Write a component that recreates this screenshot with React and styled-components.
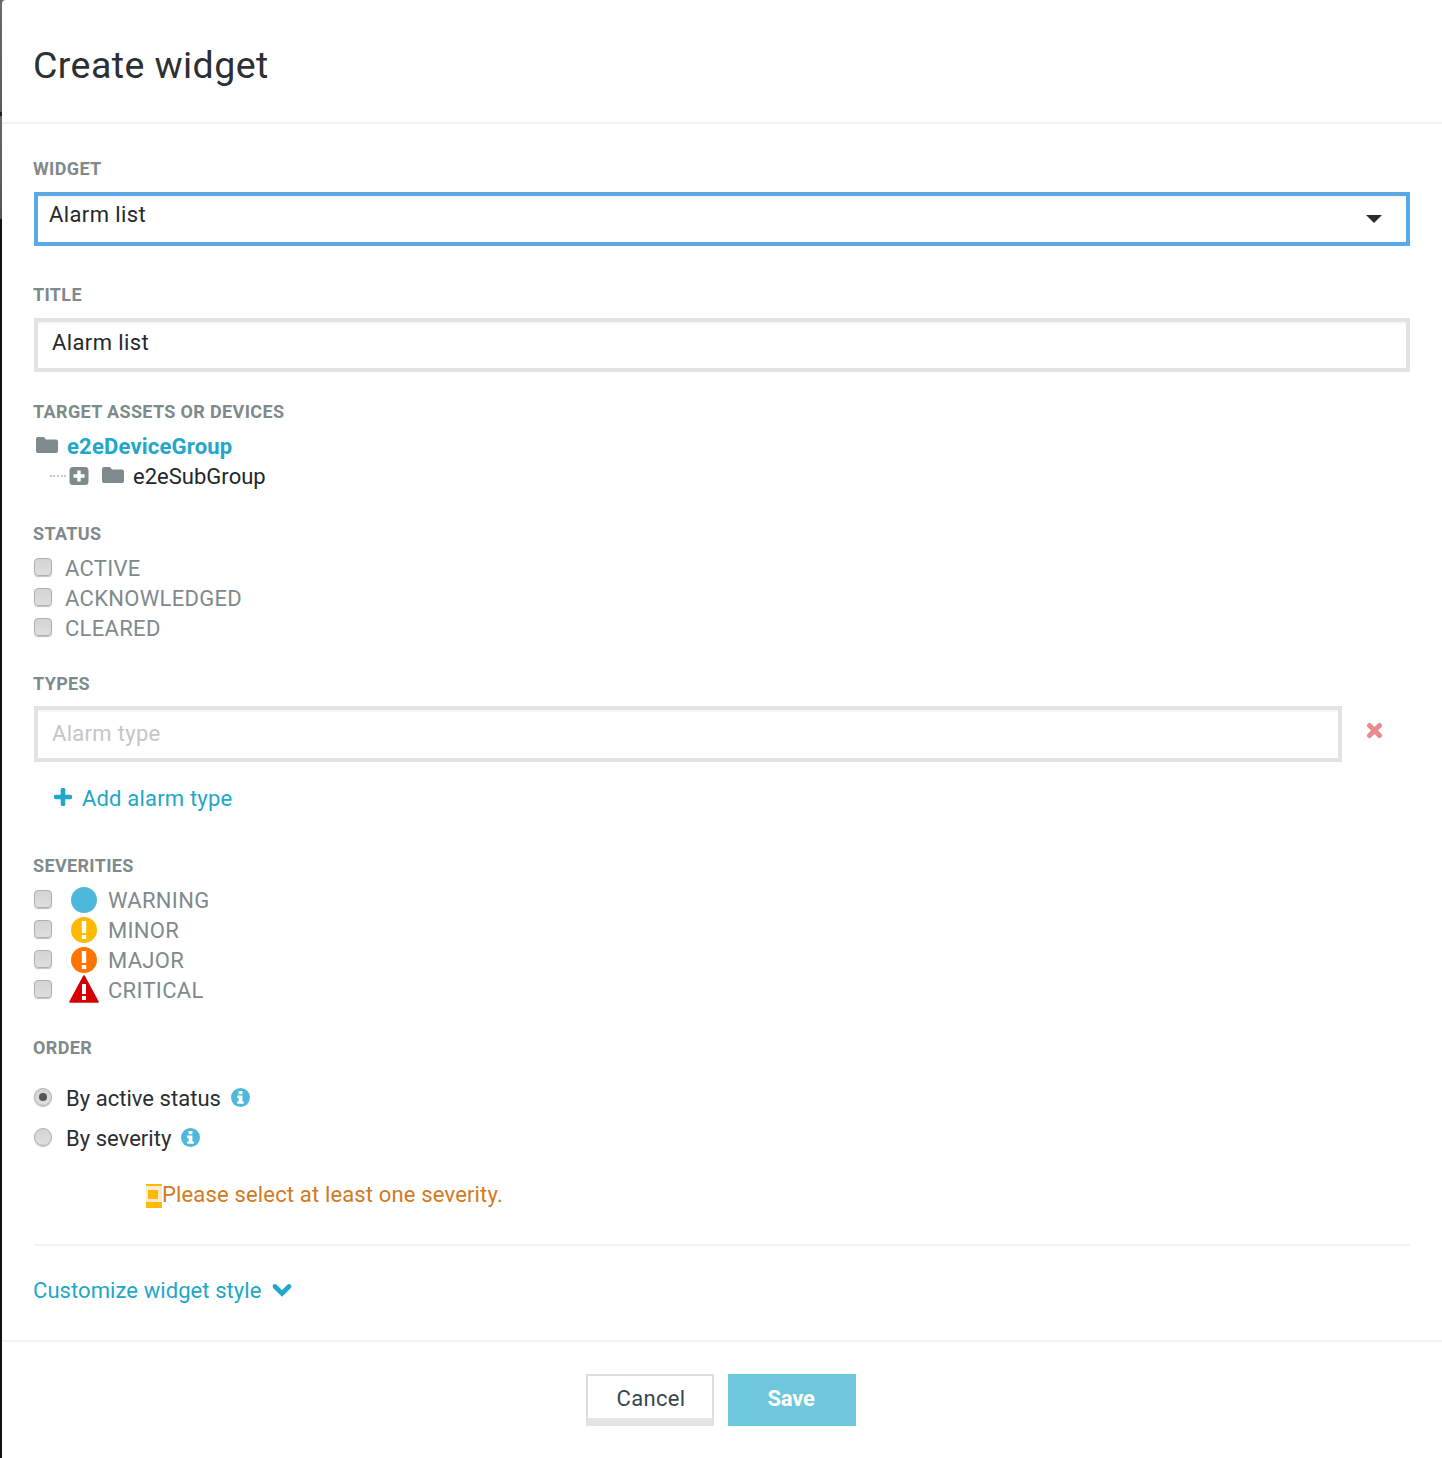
import React from 'react';
import styled, { createGlobalStyle } from 'styled-components';

const Global = createGlobalStyle`
  html, body { margin: 0; padding: 0; background: #fff; }
  body { font-family: Roboto, "Liberation Sans", sans-serif; }
`;

const Page = styled.div`
  width: 1442px;
  height: 1458px;
  box-sizing: border-box;
  padding-left: 2px;
  overflow: hidden;
  background: linear-gradient(to bottom, #6a6a6a 0, #5a5a5a 112px, #222 112px, #222 116px, #666 116px, #555 218px, #111 220px, #111 100%);
`;

const Modal = styled.div`
  height: 100%;
  background: #fff;
  border-top-left-radius: 4px;
  display: flex;
  flex-direction: column;
`;

const Header = styled.header`
  height: 124px;
  flex: none;
  box-sizing: border-box;
  padding: 41px 31px 0;
  border-bottom: 2px solid #f2f2f2;
`;

const Title = styled.h1`
  margin: 0;
  font-size: 37.5px;
  line-height: 48px;
  font-weight: 400;
  letter-spacing: 0.42px;
  color: #2c2f33;
`;

const Body = styled.div`
  height: 1218px;
  flex: none;
  box-sizing: border-box;
  padding: 34px 32px 0;
  border-bottom: 2px solid #f2f2f2;
`;

const Section = styled.section`
  margin-bottom: ${p => p.$mb || 0}px;
`;

const Label = styled.div`
  font-size: 18px;
  line-height: 22px;
  font-weight: 700;
  letter-spacing: 0.35px;
  margin-left: -1px;
  color: #7e8a8b;
  text-transform: uppercase;
  margin-bottom: ${p => p.$mb ?? 12}px;
`;

const Control = styled.div`
  box-sizing: border-box;
  width: ${p => p.$width || 1376}px;
  height: ${p => p.$height || 54}px;
  display: flex;
  align-items: center;
  justify-content: space-between;
  background: #fff;
  border: 4px solid ${p => (p.$focus ? '#5ba8e6' : '#e2e3e3')};
  box-shadow: inset 0 2px 2px rgba(0, 0, 0, 0.04);
  padding: ${p => p.$pad || '0 14px'};
  font-size: 22px;
  letter-spacing: ${p => p.$muted ? 0.3 : 0.4}px;
  color: ${p => p.$muted ? '#c4c6c6' : '#26282b'};
`;

const Caret = styled.span`
  width: 0;
  height: 0;
  border-left: 8px solid transparent;
  border-right: 8px solid transparent;
  border-top: 8px solid #2b2b2b;
  margin: 0 24px 0 0;
`;

const ControlText = styled.span`
  position: relative;
  top: ${p => p.$lift}px;
`;

const TreeRow = styled.div`
  display: flex;
  align-items: center;
  height: 30px;
  padding-left: ${p => p.$indent || 2}px;
  font-size: 22px;
  letter-spacing: 0.02px;
  color: #23262a;
`;

const FolderSvg = styled.svg`
  flex: none;
  width: 22px;
  height: 18px;
  margin: 0 9px 2px 0;
  color: #7e8a8b;
`;

const Group = styled.span`
  font-weight: 700;
  color: #20a7c9;
  letter-spacing: 0.2px;
`;

const Dots = styled.span`
  width: 16px;
  border-top: 2px dotted #c8c8c8;
  margin-right: 3px;
`;

const ExpandSvg = styled.svg`
  flex: none;
  width: 20px;
  height: 20px;
  margin-right: 13px;
  color: #7e8a8b;
`;

const CheckRow = styled.div`
  display: flex;
  align-items: center;
  height: 30px;
  font-size: 22px;
  letter-spacing: ${p => p.$dark ? 0.03 : 0.3}px;
  color: ${p => p.$dark ? '#2b2e31' : '#7e8a8b'};
`;

const Box = styled.span`
  box-sizing: border-box;
  width: 18px;
  height: 18px;
  margin: 0 13px 2px 0;
  border-radius: 4px;
  border: 1px solid #b0b0b0;
  background: linear-gradient(#d4d4d4, #dedede);
  box-shadow: 0 1px 1px rgba(0, 0, 0, 0.25);
`;

const IconSlot = styled.svg`
  width: 30px;
  height: 30px;
  margin: 0 9px 0 4px;
  flex: none;
`;

const TypeRow = styled.div`
  display: flex;
  align-items: center;
`;

const GlyphSvg = styled.svg`
  flex: none;
  width: ${p => p.$w}px;
  height: ${p => p.$h}px;
  margin: ${p => p.$m};
  color: ${p => p.$color || 'inherit'};
`;

const AddLink = styled.div`
  display: flex;
  align-items: center;
  height: 30px;
  margin: 21px 0 0 20px;
  font-size: 22px;
  letter-spacing: 0.18px;
  color: #20a7c9;
`;

const Radio = styled.span`
  box-sizing: border-box;
  width: 18px;
  height: 18px;
  border-radius: 50%;
  margin: 0 14px 2px 0;
  border: 1px solid #b0b0b0;
  background: linear-gradient(#d4d4d4, #dedede);
  box-shadow: 0 1px 1px rgba(0, 0, 0, 0.25);
  display: flex;
  align-items: center;
  justify-content: center;
  &::after {
    content: '';
    width: 8px;
    height: 8px;
    border-radius: 50%;
    background: ${p => p.$on ? '#555' : 'transparent'};
  }
`;

const RadioRow = styled(CheckRow)`
  height: 40px;
`;

const Warning = styled.div`
  display: flex;
  align-items: flex-start;
  margin: 24px 0 0 112px;
  height: 40px;
  font-size: 22px;
  letter-spacing: 0.16px;
  color: #d17a22;
`;

const Tofu = styled.span`
  box-sizing: border-box;
  width: 16px;
  height: 24px;
  margin-top: 2px;
  border: solid #ffb900;
  border-width: 2px 0 6px;
  background: #f6ecd0;
  padding: 4px 2px 0;
  &::after {
    content: '';
    display: block;
    width: 10px;
    height: 9px;
    background: #ffb900;
  }
`;

const Rule = styled.hr`
  margin: 22px 0 0;
  border: 0;
  border-top: 2px solid #f2f2f2;
`;

const Customize = styled.div`
  display: flex;
  align-items: center;
  height: 30px;
  margin: 29px 0 0 -1px;
  font-size: 22px;
  letter-spacing: 0.08px;
  color: #20a7c9;
`;

const Footer = styled.footer`
  flex: 1;
  display: flex;
  justify-content: center;
  gap: 14px;
  padding: 32px 2px 0 0;
`;

const BaseButton = styled.button`
  box-sizing: border-box;
  width: 128px;
  height: 52px;
  font-family: inherit;
  font-size: 22px;
`;

const Cancel = styled(BaseButton)`
  background: #fff;
  color: #36474f;
  letter-spacing: 0.3px;
  border: 2px solid #dcdfdf;
  border-bottom: 8px solid #e3e4e4;
  padding: 2px 0 0 2px;
`;

const Save = styled(BaseButton)`
  background: #6ec7da;
  color: #fff;
  border: 0;
  font-weight: 700;
  letter-spacing: -0.2px;
  padding: 0 2px 4px 0;
`;

const Round = ({ color }) => (
  <IconSlot viewBox="0 0 30 30">
    <circle cx="15" cy="15" r="13" fill={color} />
    <rect x="12.8" y="6" width="4.4" height="12" fill="#fff" />
    <rect x="12.8" y="20" width="4.4" height="4" fill="#fff" />
  </IconSlot>
);

const Folder = () => (
  <FolderSvg viewBox="0 0 22 18">
    <path
      d="M2 1 H8 L10 3.5 H20 Q22 3.5 22 5.5 V15 Q22 17 20 17 H2 Q0 17 0 15 V3 Q0 1 2 1 Z"
      fill="currentColor"
    />
  </FolderSvg>
);

const Expand = () => (
  <ExpandSvg viewBox="0 0 20 20">
    <rect x="0.5" y="1" width="19" height="18" rx="3.5" fill="currentColor" />
    <path d="M10 4.5 V15.5 M4.5 10 H15.5" stroke="#fff" strokeWidth="3.4" />
  </ExpandSvg>
);

const Info = () => (
  <GlyphSvg $w={19} $h={19} $m="0 0 2px 10px" viewBox="0 0 19 19">
    <circle cx="9.5" cy="9.5" r="9.5" fill="#4db8dc" />
    <rect x="7.6" y="3" width="3.8" height="3.2" fill="#fff" />
    <path d="M6.2 7.6 H11.4 V13.4 H12.8 V15.8 H6.2 V13.4 H7.6 V10 H6.2 Z" fill="#fff" />
  </GlyphSvg>
);

export default function App() {
  return (
    <Page>
      <Global />
      <Modal>
        <Header><Title>Create widget</Title></Header>
        <Body>
          <Section $mb={38}>
            <Label>Widget</Label>
            <Control $focus $pad="0 0 0 11px"><ControlText $lift={-5}>Alarm list</ControlText><Caret /></Control>
          </Section>
          <Section $mb={29}>
            <Label>Title</Label>
            <Control><ControlText $lift={-3}>Alarm list</ControlText></Control>
          </Section>
          <Section $mb={32}>
            <Label $mb={8}>Target assets or devices</Label>
            <TreeRow><Folder /><Group>e2eDeviceGroup</Group></TreeRow>
            <TreeRow $indent={16}>
              <Dots /><Expand /><Folder /><span>e2eSubGroup</span>
            </TreeRow>
          </Section>
          <Section $mb={30}>
            <Label $mb={8}>Status</Label>
            <CheckRow><Box />ACTIVE</CheckRow>
            <CheckRow><Box />ACKNOWLEDGED</CheckRow>
            <CheckRow><Box />CLEARED</CheckRow>
          </Section>
          <Section $mb={42}>
            <Label $mb={11}>Types</Label>
            <TypeRow>
              <Control $width={1308} $height={56} $muted><ControlText $lift={-1}>Alarm type</ControlText></Control>
              <GlyphSvg $w={17} $h={17} $m="0 0 8px 24px" $color="#e88b8f" viewBox="0 0 17 17">
                <path d="M3.5 3.5 L13.5 13.5 M13.5 3.5 L3.5 13.5" stroke="currentColor" strokeWidth="5" strokeLinecap="round" />
              </GlyphSvg>
            </TypeRow>
            <AddLink>
              <GlyphSvg $w={18} $h={18} $m="0 10px 2px 0" viewBox="0 0 18 18">
                <path d="M9 2 V16 M2 9 H16" stroke="currentColor" strokeWidth="4.6" strokeLinecap="round" />
              </GlyphSvg>
              Add alarm type
            </AddLink>
          </Section>
          <Section $mb={32}>
            <Label $mb={8}>Severities</Label>
            <CheckRow>
              <Box />
              <IconSlot viewBox="0 0 30 30"><circle cx="15" cy="15" r="13" fill="#4db8dc" /></IconSlot>
              WARNING
            </CheckRow>
            <CheckRow><Box /><Round color="#ffb900" />MINOR</CheckRow>
            <CheckRow><Box /><Round color="#ff7500" />MAJOR</CheckRow>
            <CheckRow>
              <Box />
              <IconSlot viewBox="0 0 30 30">
                <path d="M15 1 L29 27 H1 Z" fill="#d40000" stroke="#d40000" strokeWidth="1.6" strokeLinejoin="round" />
                <rect x="13" y="9" width="4" height="10" fill="#fff" />
                <rect x="13" y="21" width="4" height="4" fill="#fff" />
              </IconSlot>
              CRITICAL
            </CheckRow>
          </Section>
          <Section>
            <Label $mb={19}>Order</Label>
            <RadioRow $dark><Radio $on />By active status<Info /></RadioRow>
            <RadioRow $dark><Radio />By severity<Info /></RadioRow>
            <Warning><Tofu />Please select at least one severity.</Warning>
          </Section>
          <Rule />
          <Customize>
            Customize widget style
            <GlyphSvg $w={20} $h={14} $m="0 0 0 10px" viewBox="0 0 20 14">
              <path d="M3 3.5 L10 10.5 L17 3.5" fill="none" stroke="currentColor" strokeWidth="4.6" strokeLinecap="round" strokeLinejoin="miter" />
            </GlyphSvg>
          </Customize>
        </Body>
        <Footer>
          <Cancel>Cancel</Cancel>
          <Save>Save</Save>
        </Footer>
      </Modal>
    </Page>
  );
}
